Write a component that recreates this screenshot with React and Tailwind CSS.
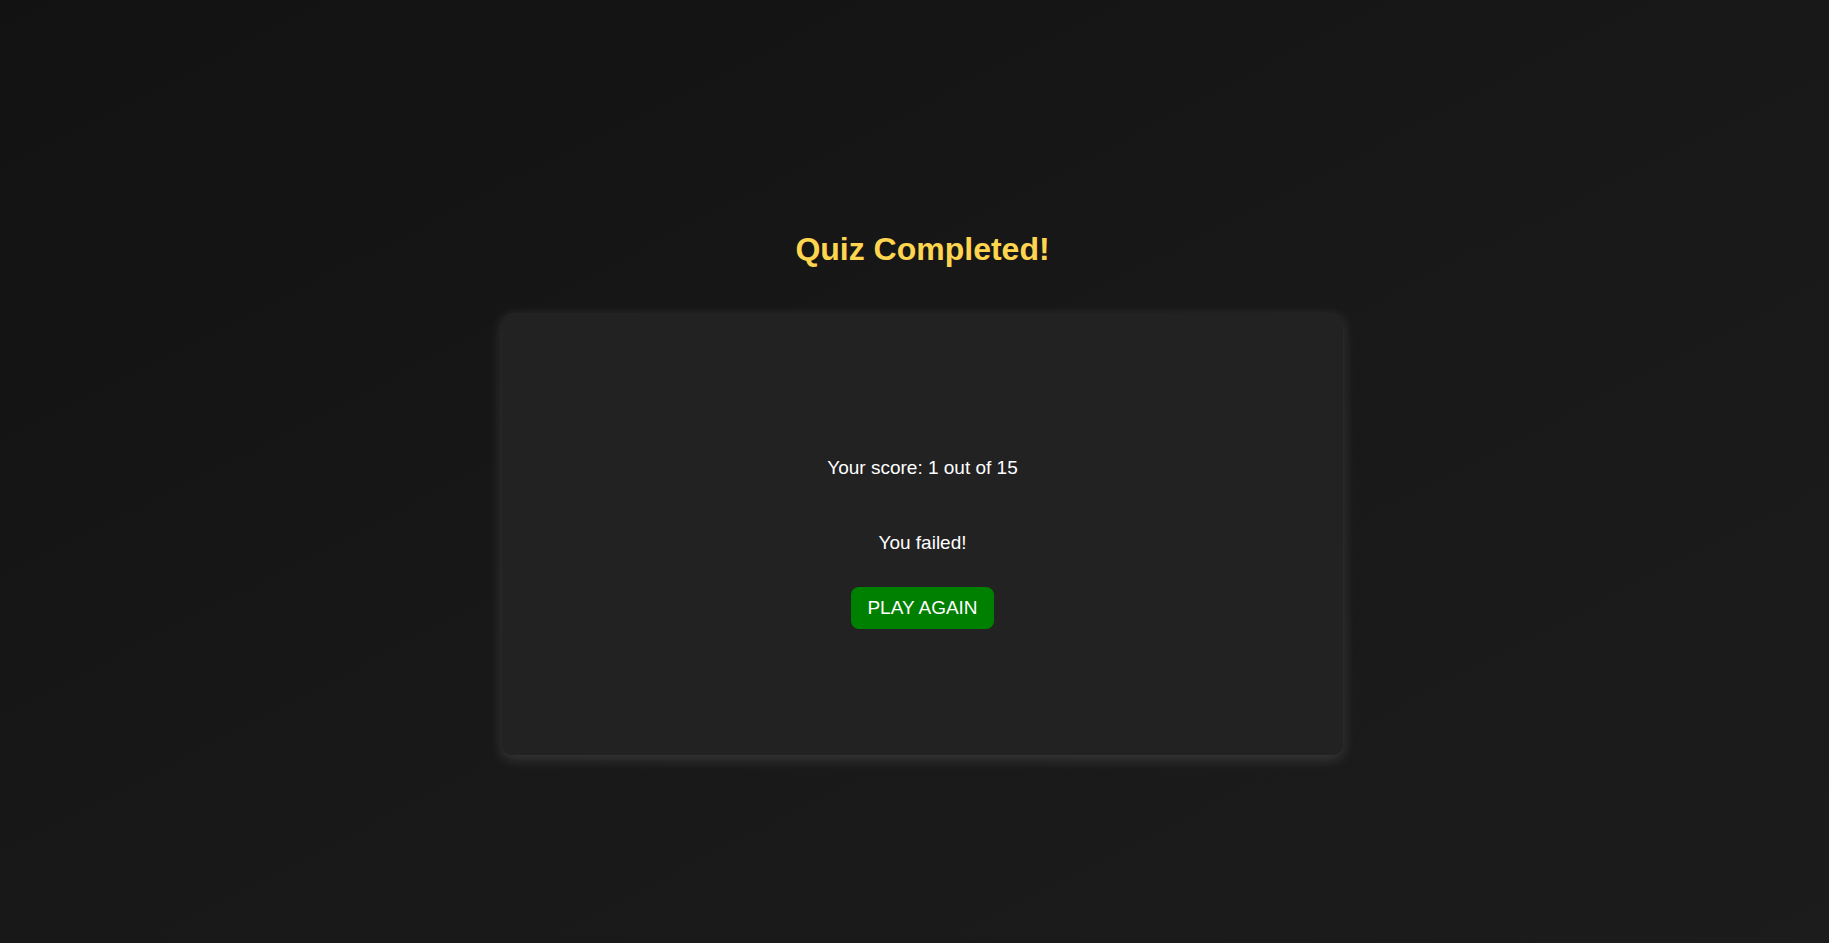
export default function App() {
  return (
    <div
      className="min-h-screen w-full bg-gradient-to-br from-[#121212] via-[#181818] to-[#1c1c1c] flex flex-col items-center pt-[231px] pl-[16px]"
      style={{ fontFamily: '"Liberation Sans", Arial, sans-serif' }}
    >
      <h1 className="text-[32px] leading-[37px] font-bold text-[#ffd54f]">Quiz Completed!</h1>
      <div className="mt-[45px] w-[841px] h-[442px] rounded-[10px] bg-[#222222] shadow-[0_4px_14px_rgba(255,255,255,0.15)] flex flex-col items-center pt-[144px]">
        <p className="text-[19px] leading-[22px] text-white">Your score: 1 out of 15</p>
        <p className="mt-[53px] text-[19px] leading-[22px] text-white">You failed!</p>
        <button className="mt-[33px] h-[42px] px-4 rounded-[8px] bg-[#008000] text-white text-[19px] leading-[22px]">
          PLAY AGAIN
        </button>
      </div>
    </div>
  );
}
